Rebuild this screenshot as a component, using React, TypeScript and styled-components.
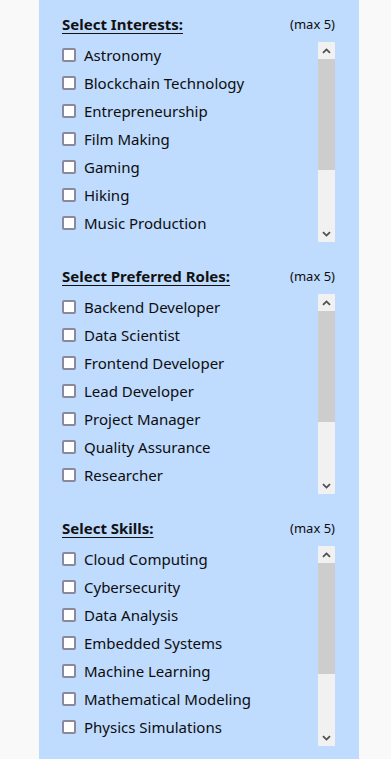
import styled, { createGlobalStyle } from 'styled-components';

const sections = [
    {
        title: 'Select Interests:',
        items: [
            'Astronomy',
            'Blockchain Technology',
            'Entrepreneurship',
            'Film Making',
            'Gaming',
            'Hiking',
            'Music Production',
            'Photography',
            'Robotics',
            'Space Exploration',
        ],
    },
    {
        title: 'Select Preferred Roles:',
        items: [
            'Backend Developer',
            'Data Scientist',
            'Frontend Developer',
            'Lead Developer',
            'Project Manager',
            'Quality Assurance',
            'Researcher',
            'Software Engineer',
            'UI/UX Designer',
            'Team Lead',
        ],
    },
    {
        title: 'Select Skills:',
        items: [
            'Cloud Computing',
            'Cybersecurity',
            'Data Analysis',
            'Embedded Systems',
            'Machine Learning',
            'Mathematical Modeling',
            'Physics Simulations',
            'Programming',
            'Robotics',
            'Web Development',
        ],
    },
];

const ROW = 28;
const VIEW = 200;
const TRACK = VIEW - 34;

function Chevron({ down }: { down?: boolean }) {
    return (
        <svg width="9" height="6" viewBox="0 0 9 6">
            <path
                d={down ? 'M1 1.2 L4.5 4.6 L8 1.2' : 'M1 4.8 L4.5 1.4 L8 4.8'}
                fill="none"
                stroke="#505050"
                strokeWidth="1.8"
            />
        </svg>
    );
}

function Section({ title, items }: { title: string; items: string[] }) {
    const content = items.length * ROW + 20;
    const thumb = Math.round((TRACK * VIEW) / content);

    return (
        <SectionBox>
            <Header>
                <Title>{title}</Title>
                <Max>(max 5)</Max>
            </Header>
            <ScrollArea>
                <List>
                    {items.map((item) => (
                        <Row key={item}>
                            <Check type="checkbox" />
                            <Label>{item}</Label>
                        </Row>
                    ))}
                </List>
                <Scrollbar>
                    <Arrow>
                        <Chevron />
                    </Arrow>
                    <Track>
                        <Thumb style={{ height: thumb }} />
                    </Track>
                    <Arrow>
                        <Chevron down />
                    </Arrow>
                </Scrollbar>
            </ScrollArea>
        </SectionBox>
    );
}

export default function App() {
    return (
        <>
            <GlobalStyle />
            <Page>
                <Panel>
                    {sections.map((s) => (
                        <Section key={s.title} title={s.title} items={s.items} />
                    ))}
                </Panel>
            </Page>
        </>
    );
}

const GlobalStyle = createGlobalStyle`
    body {
        margin: 0;
        background: #f9f9f9;
        font-family: "Noto Sans", "Open Sans", sans-serif;
        color: #0d0d0d;
    }
`;

const Page = styled.div`
    padding-left: 39px;
    min-height: 100vh;
`;

const Panel = styled.div`
    width: 320px;
    min-height: 100vh;
    box-sizing: border-box;
    background: #bfdbfe;
    padding: 14px 24px 20px 23px;
    display: flex;
    flex-direction: column;
    gap: 24px;
`;

const SectionBox = styled.div`
    display: flex;
    flex-direction: column;
    gap: 8px;
`;

const Header = styled.div`
    height: 20px;
    display: flex;
    align-items: center;
    justify-content: space-between;
`;

const Title = styled.div`
    font-size: 15px;
    font-weight: 700;
    color: #111;
    text-decoration: underline;
    text-underline-offset: 3px;
`;

const Max = styled.div`
    font-size: 13px;
`;

const ScrollArea = styled.div`
    height: ${VIEW}px;
    display: flex;
`;

const List = styled.div`
    flex: 1;
    overflow: hidden;
    display: flex;
    flex-direction: column;
`;

const Row = styled.label`
    flex: 0 0 ${ROW}px;
    box-sizing: border-box;
    padding-bottom: 2px;
    display: flex;
    align-items: center;
    gap: 8px;
`;

const Check = styled.input`
    appearance: none;
    width: 14px;
    height: 14px;
    box-sizing: border-box;
    margin: 0 0 1px 0;
    border: 2px solid #8a8a9c;
    border-radius: 2px;
    background: #ffffff;
`;

const Label = styled.span`
    font-size: 15px;
`;

const Scrollbar = styled.div`
    width: 17px;
    display: flex;
    flex-direction: column;
    background: #f1f1f1;
`;

const Arrow = styled.div`
    height: 17px;
    display: flex;
    align-items: center;
    justify-content: center;
`;

const Track = styled.div`
    flex: 1;
`;

const Thumb = styled.div`
    background: #cdcdcd;
`;
